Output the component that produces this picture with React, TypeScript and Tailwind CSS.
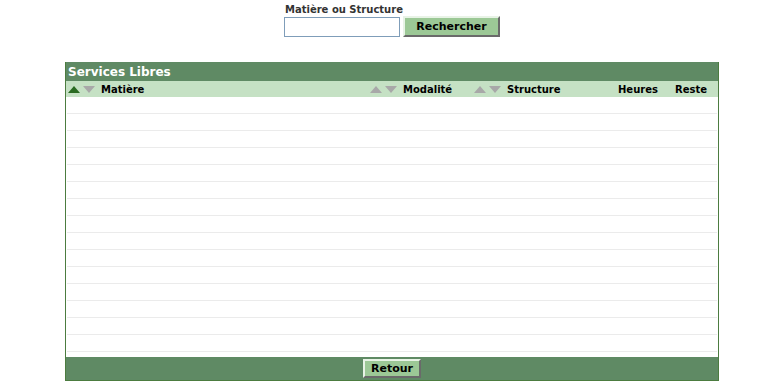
const font = { fontFamily: '"DejaVu Sans", Verdana, sans-serif' };

function Arrows({ active }: { active?: boolean }) {
  return (
    <span className="flex items-center gap-[3px]">
      <svg width="12" height="7" viewBox="0 0 12 7">
        <polygon points="0,7 6,0 12,7" fill={active ? "#2a6b22" : "#a8a8a8"} />
      </svg>
      <svg width="12" height="7" viewBox="0 0 12 7">
        <polygon points="0,0 12,0 6,7" fill="#a8a8a8" />
      </svg>
    </span>
  );
}

const btn =
  "bg-[#9cc896] text-[11px] font-bold text-black border-2 border-t-[#e8f3e6] border-l-[#e8f3e6] border-r-[#6a6a6a] border-b-[#6a6a6a]";

export default function App() {
  const rows = Array.from({ length: 15 });
  return (
    <div className="w-[784px] h-[381px] bg-white overflow-hidden" style={font}>
      {/* Search */}
      <div className="flex flex-col items-center pt-[3px]">
        <div className="w-[216px] text-[10px] font-bold text-[#333] leading-[13px] pl-[1px]">
          Matière ou Structure
        </div>
        <div className="flex items-center gap-[3px] w-[216px]">
          <input
            className="w-[116px] h-[20px] border border-[#7f9db9] bg-white outline-none text-[11px] px-1"
            type="text"
          />
          <button className={`${btn} w-[97px] h-[21px] leading-none`}>Rechercher</button>
        </div>
      </div>

      {/* Panel */}
      <div className="w-[654px] mx-auto mt-[25px] border border-[#4c7c40] border-t-0">
        <div className="bg-[#5f8a64] h-[19px] flex items-center px-[2px] text-white font-bold text-[12px] leading-none">
          Services Libres
        </div>
        <div className="bg-[#c5e1c4] h-[16px] flex items-center text-[10px] font-bold text-black pl-[2px]">
          <div className="w-[302px] flex items-center gap-[6px]">
            <Arrows active />
            <span>Matière</span>
          </div>
          <div className="w-[104px] flex items-center gap-[6px]">
            <Arrows />
            <span>Modalité</span>
          </div>
          <div className="w-[144px] flex items-center gap-[6px]">
            <Arrows />
            <span>Structure</span>
          </div>
          <div className="w-[57px]">Heures</div>
          <div>Reste</div>
        </div>
        <div className="bg-white h-[260px] px-[1px]">
          {rows.map((_, i) => (
            <div key={i} className="h-[17px] border-b border-[#ebebeb]" />
          ))}
        </div>
        <div className="bg-[#5f8a64] h-[23px] flex items-center justify-center">
          <button className={`${btn} w-[58px] h-[19px] leading-none`}>Retour</button>
        </div>
      </div>
    </div>
  );
}
